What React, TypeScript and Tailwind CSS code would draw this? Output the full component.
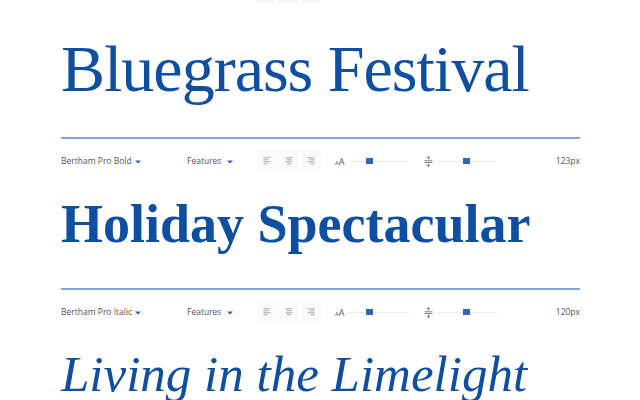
const SECTIONS = [
  { title: 'Bluegrass Festival', font: 'Bertham Pro Bold', size: '123px', style: 'text-[66px] tracking-[-1px] font-normal not-italic', box: 'h-[134px] pt-[33px]' },
  { title: 'Holiday Spectacular', font: 'Bertham Pro Italic', size: '120px', style: 'text-[54px] tracking-[0px] font-bold not-italic', box: 'h-[116px] pt-[25px]' },
]

function Caret() {
  return (
    <svg width="6" height="4" viewBox="0 0 6 4" className="ml-[3px] mt-[1px]">
      <path d="M0 0.5h6L3 3.5z" fill="#2f62ad" />
    </svg>
  )
}

function AlignIcon({ kind }: { kind: 'left' | 'center' | 'right' }) {
  const rows = [7, 5, 7, 4]
  return (
    <svg width="8" height="8" viewBox="0 0 8 8">
      {rows.map((w, i) => {
        const x = kind === 'left' ? 0.5 : kind === 'right' ? 7.5 - w : (8 - w) / 2
        return <rect key={i} x={x} y={0.5 + i * 2} width={w} height="0.7" fill="#888" />
      })}
    </svg>
  )
}

function LineHeightIcon() {
  return (
    <svg width="9" height="11" viewBox="0 0 9 11">
      <path d="M4.5 0.5v3M2.8 2L4.5 0.5 6.2 2M4.5 7.5v3M2.8 9L4.5 10.5 6.2 9" stroke="#666" strokeWidth="0.8" fill="none" />
      <rect x="0.5" y="4.4" width="8" height="0.8" fill="#666" />
      <rect x="0.5" y="6" width="8" height="0.8" fill="#666" />
    </svg>
  )
}

function Slider({ thumb, width }: { thumb: number; width: number }) {
  return (
    <div className="relative h-[8px] flex items-center" style={{ width }}>
      <div className="h-px w-full bg-[#e8eaee]" />
      <div className="absolute top-[1px] w-[7px] h-[6px] bg-[#3465ad]" style={{ left: thumb }} />
    </div>
  )
}

function Toolbar({ font, size }: { font: string; size: string }) {
  return (
    <div className="mt-[11px] h-[22px] flex items-center text-[8.5px] text-[#555] font-['Open_Sans',sans-serif]">
      <div className="w-[126px] flex items-center">
        {font}
        <Caret />
      </div>
      <div className="w-[70px] flex items-center">
        Features
        <span className="ml-[3px]"><Caret /></span>
      </div>
      <div className="flex gap-[2px] h-full">
        {(['left', 'center', 'right'] as const).map((k) => (
          <div key={k} className="w-[20px] h-full bg-[#fafafa] flex items-center justify-center">
            <AlignIcon kind={k} />
          </div>
        ))}
      </div>
      <div className="ml-[14px] w-[14px] flex items-baseline leading-none">
        <span className="text-[6px]">A</span>
        <span className="text-[9px]">A</span>
      </div>
      <Slider thumb={17} width={60} />
      <div className="ml-[15px] mr-[5px] flex items-center"><LineHeightIcon /></div>
      <Slider thumb={25} width={59} />
      <div className="flex-1 text-right">{size}</div>
    </div>
  )
}

export default function App() {
  return (
    <div className="w-[640px] h-[400px] overflow-hidden bg-white">
      <div className="pl-[256px] h-[3px] flex gap-[2px]">
        <div className="w-[20px] h-full bg-[#f7f7f7]" />
        <div className="w-[20px] h-full bg-[#f7f7f7]" />
        <div className="w-[20px] h-full bg-[#f7f7f7]" />
      </div>
      <div className="ml-[61px] w-[519px]">
        {SECTIONS.map((s) => (
          <section key={s.title}>
            <div className={s.box}>
              <h1 className={`leading-none whitespace-nowrap text-[#0f4fa1] font-['Liberation_Serif',serif] ${s.style}`}>
                {s.title}
              </h1>
            </div>
            <div className="h-[2px] bg-[#87a5d4]" />
            <Toolbar font={s.font} size={s.size} />
          </section>
        ))}
        <div className="pt-[26px]">
          <h1 className="leading-none whitespace-nowrap text-[51px] italic text-[#0f4fa1] font-['Liberation_Serif',serif]">
            Living in the Limelight
          </h1>
        </div>
      </div>
    </div>
  )
}
